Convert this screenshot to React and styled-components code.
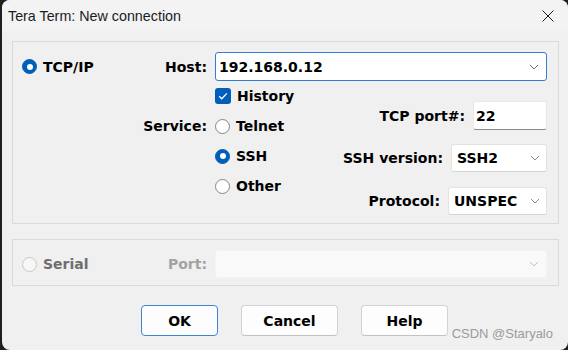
import styled, { createGlobalStyle } from "styled-components";

const GlobalStyle = createGlobalStyle`
	html, body {
		margin: 0;
		padding: 0;
		background: #1f1f1f;
	}
`;

const Chevron = ({ color = "#6f6f6f" }) => (
	<svg width="10" height="6" viewBox="0 0 10 6">
		<path d="M1 1 L5 5 L9 1" fill="none" stroke={color} strokeWidth="1" />
	</svg>
);

const CloseIcon = () => (
	<svg width="12" height="12" viewBox="0 0 12 12">
		<path d="M0.5 0.5 L11.5 11.5 M11.5 0.5 L0.5 11.5" stroke="#1b1b1b" strokeWidth="1" />
	</svg>
);

const CheckMark = () => (
	<svg width="16" height="16" viewBox="0 0 16 16">
		<path d="M4.2 8.2 L6.8 10.8 L11.8 5.4" fill="none" stroke="#fff" strokeWidth="1.3" />
	</svg>
);

export default function App() {
	return (
		<>
			<GlobalStyle />
			<Window>
				<TitleBar>
					<Title>Tera Term: New connection</Title>
					<CloseIcon />
				</TitleBar>
				<Content>
					<GroupBox $pad="10px 11px 8px 0">
						<LeftCell>
							<Option>
								<Radio $checked />
								<span>TCP/IP</span>
							</Option>
							<span>Host:</span>
						</LeftCell>
						<Combo $focused>
							<FieldText>192.168.0.12</FieldText>
							<Chevron />
						</Combo>

						<ServiceLabel>Service:</ServiceLabel>
						<ServiceArea>
							<OptionList>
								<OptionRow>
									<Checkbox>
										<CheckMark />
									</Checkbox>
									<span>History</span>
								</OptionRow>
								<OptionRow>
									<Radio />
									<span>Telnet</span>
								</OptionRow>
								<OptionRow>
									<Radio $checked />
									<span>SSH</span>
								</OptionRow>
								<OptionRow>
									<Radio />
									<span>Other</span>
								</OptionRow>
							</OptionList>
							<Settings>
								<SettingRow $top={20}>
									<span>TCP port#:</span>
									<PortInput>22</PortInput>
								</SettingRow>
								<SettingRow $top={14}>
									<span>SSH version:</span>
									<Select $width={96}>
										<span>SSH2</span>
										<Chevron color="#8a8a8a" />
									</Select>
								</SettingRow>
								<SettingRow $top={15}>
									<span>Protocol:</span>
									<Select $width={99}>
										<span>UNSPEC</span>
										<Chevron color="#8a8a8a" />
									</Select>
								</SettingRow>
							</Settings>
						</ServiceArea>
					</GroupBox>

					<GroupBox $pad="10px 11px 7px 0" $top={15}>
						<LeftCell>
							<Option $disabled>
								<Radio $disabled />
								<span>Serial</span>
							</Option>
							<DimLabel>Port:</DimLabel>
						</LeftCell>
						<Combo $disabled>
							<span />
							<Chevron color="#c2c2c2" />
						</Combo>
					</GroupBox>
				</Content>
				<ButtonRow>
					<Button $primary $width={77}>OK</Button>
					<Button $width={97}>Cancel</Button>
					<Button $width={87}>Help</Button>
				</ButtonRow>
				<Watermark>CSDN @Staryalo</Watermark>
			</Window>
		</>
	);
}

const Window = styled.div`
	position: relative;
	width: 566px;
	height: 350px;
	margin-left: 2px;
	background: #f0f0f0;
	border-radius: 8px;
	overflow: hidden;
	display: flex;
	flex-direction: column;

	font-family: "DejaVu Sans", "Liberation Sans", sans-serif;
	font-weight: bold;
	font-size: 14px;
	color: #000;
`;

const TitleBar = styled.div`
	height: 31px;
	flex-shrink: 0;
	box-sizing: border-box;
	padding: 0 14px 0 6px;
	background: #f3f3f3;
	display: flex;
	align-items: center;
	justify-content: space-between;
`;

const Title = styled.span`
	font-family: "Liberation Sans", Arial, sans-serif;
	font-weight: normal;
	font-size: 14.3px;
	color: #1b1b1b;
`;

const Content = styled.div`
	padding: 10px 9px 0 10px;
`;

const GroupBox = styled.div`
	margin-top: ${(p) => p.$top || 0}px;
	border: 1px solid #dadada;
	padding: ${(p) => p.$pad};
	display: grid;
	grid-template-columns: 194px 1fr;
	column-gap: 8px;
`;

const LeftCell = styled.div`
	display: flex;
	align-items: center;
	justify-content: space-between;
	padding-left: 9px;
`;

const Option = styled.label`
	display: flex;
	align-items: center;
	gap: 6px;
	color: ${(p) => (p.$disabled ? "#6e6e6e" : "#000")};
`;

const OptionRow = styled.label`
	height: 30px;
	display: flex;
	align-items: center;
	gap: 6px;
`;

const DimLabel = styled.span`
	color: #a3a3a3;
`;

const Radio = styled.span`
	position: relative;
	box-sizing: border-box;
	width: 15px;
	height: 15px;
	border-radius: 50%;
	flex-shrink: 0;
	background: ${(p) => (p.$checked ? "#005fb8" : p.$disabled ? "#f7f7f7" : "#fff")};
	border: 1px solid
		${(p) => (p.$checked ? "#005fb8" : p.$disabled ? "#c9c9c9" : "#858585")};

	&::after {
		content: "";
		display: ${(p) => (p.$checked ? "block" : "none")};
		position: absolute;
		left: 50%;
		top: 50%;
		width: 6px;
		height: 6px;
		margin: -3px 0 0 -3px;
		border-radius: 50%;
		background: #fff;
	}
`;

const Checkbox = styled.span`
	width: 16px;
	height: 16px;
	border-radius: 3px;
	background: #005fb8;
	display: flex;
	flex-shrink: 0;
`;

const Combo = styled.div`
	box-sizing: border-box;
	height: ${(p) => (p.$disabled ? 28 : 29)}px;
	display: flex;
	align-items: center;
	justify-content: space-between;
	padding: 0 7px 0 3px;
	border-radius: 3px;
	background: ${(p) => (p.$disabled ? "#f9f9f9" : "#fff")};
	border: 1px solid ${(p) => (p.$focused ? "#2f7fd6" : p.$disabled ? "#f4f4f4" : "#e3e3e3")};
`;

const FieldText = styled.span`
	color: #000;
`;

const ServiceLabel = styled.div`
	height: 30px;
	margin-top: 30px;
	display: flex;
	align-items: center;
	justify-content: flex-end;
`;

const ServiceArea = styled.div`
	display: flex;
	justify-content: space-between;
`;

const OptionList = styled.div`
	display: flex;
	flex-direction: column;
`;

const Settings = styled.div`
	display: flex;
	flex-direction: column;
	align-items: flex-end;
`;

const SettingRow = styled.div`
	margin-top: ${(p) => p.$top}px;
	display: flex;
	align-items: center;
	justify-content: flex-end;
	gap: 8px;
`;

const PortInput = styled.div`
	box-sizing: border-box;
	width: 74px;
	height: 29px;
	padding-left: 2px;
	display: flex;
	align-items: center;
	background: #fff;
	border: 1px solid #e8e8e8;
	border-bottom: 1px solid #8a8a8a;
	border-radius: 3px;
`;

const Select = styled.div`
	box-sizing: border-box;
	width: ${(p) => p.$width}px;
	height: 28px;
	padding: 0 6px 0 5px;
	display: flex;
	align-items: center;
	justify-content: space-between;
	background: #fff;
	border: 1px solid #e3e3e3;
	border-bottom-color: #d4d4d4;
	border-radius: 3px;
`;

const ButtonRow = styled.div`
	margin-top: 19px;
	padding-left: 139px;
	display: flex;
	gap: 23px;
`;

const Button = styled.button`
	box-sizing: border-box;
	width: ${(p) => p.$width}px;
	height: 31px;
	padding: 0;
	font-family: inherit;
	font-weight: bold;
	font-size: 14px;
	color: #000;
	background: #fdfdfd;
	border: 1px solid ${(p) => (p.$primary ? "#3b86d4" : "#d3d3d3")};
	border-bottom-color: ${(p) => (p.$primary ? "#3b86d4" : "#c2c2c2")};
	border-radius: 4px;
`;

const Watermark = styled.div`
	position: absolute;
	right: 15px;
	bottom: 9px;
	font-family: "Liberation Sans", Arial, sans-serif;
	font-weight: normal;
	font-size: 13px;
	line-height: 15px;
	color: #9b9b9b;
`;
